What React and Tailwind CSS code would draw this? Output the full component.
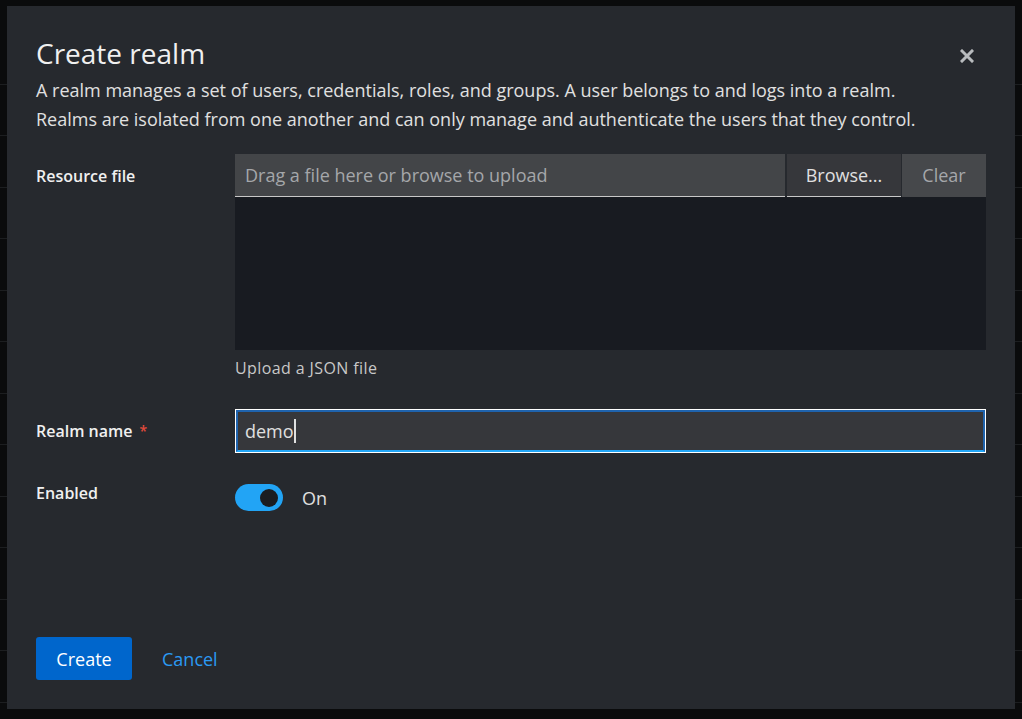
import React from "react";

const font = { fontFamily: "'Open Sans', 'Noto Sans', sans-serif" };

function Row() {
  return <div className="h-[51.5px] border-b border-[#1c1e20]" />;
}

export default function App() {
  const rows = Array.from({ length: 13 });
  return (
    <div className="relative w-[1022px] h-[719px] overflow-hidden bg-[#0a0b0c]" style={font}>
      <div className="flex flex-col pt-[33px]">
        {rows.map((_, i) => (
          <Row key={i} />
        ))}
      </div>
      <div className="absolute left-[7px] top-[6px] w-[1008px] h-[703px] bg-[#26292e] px-[29px] pt-[30px] pb-[29px] flex flex-col text-[#e0e0e0]">
        <div className="flex items-start justify-between">
          <h1 className="text-[28px] leading-[34px] text-[#f0f0f0]">Create realm</h1>
          <button className="mt-[13px] mr-[12px] text-[#b8bbbe]" aria-label="Close">
            <svg width="14" height="14" viewBox="0 0 14 14">
              <path d="M2 2 L12 12 M12 2 L2 12" stroke="currentColor" strokeWidth="3" strokeLinecap="square" />
            </svg>
          </button>
        </div>
        <p className="mt-[6px] text-[18px] leading-[29px] text-[#e0e0e0]">
          A realm manages a set of users, credentials, roles, and groups. A user belongs to and logs into a realm.
          <br />
          Realms are isolated from one another and can only manage and authenticate the users that they control.
        </p>

        <div className="mt-[20px] grid grid-cols-[199px_1fr]">
          <div className="pt-[11px] text-[16px] leading-[22px] font-semibold text-[#f0f0f0]">Resource file</div>
          <div className="flex flex-col">
            <div className="flex h-[43px]">
              <div className="flex-1 flex items-center px-[10px] bg-[#434548] border-b border-[#c8c8c8] text-[18px] leading-[24px] text-[#a5a7aa]">
                Drag a file here or browse to upload
              </div>
              <div className="w-[114px] ml-[2px] flex items-center justify-center bg-[#36373b] border-b border-[#c8c8c8] text-[18px] leading-[24px] text-[#e0e0e0]">
                Browse...
              </div>
              <div className="w-[84px] ml-[1px] flex items-center justify-center pb-[1px] bg-[#46484b] text-[18px] leading-[24px] text-[#a5a7aa]">
                Clear
              </div>
            </div>
            <div className="h-[153px] bg-[#181b21]" />
            <div className="mt-[8px] text-[16px] leading-[20px] tracking-[0.4px] text-[#c8c8c8]">Upload a JSON file</div>
          </div>
        </div>

        <div className="mt-[31px] grid grid-cols-[199px_1fr] items-center">
          <div className="text-[16px] leading-[22px] font-semibold text-[#f0f0f0] flex items-center">
            Realm name
            <span className="ml-[7px] text-[#e24a3b] text-[14px]">*</span>
          </div>
          <div className="h-[44px] outline outline-1 outline-white -outline-offset-1 p-[1px]">
            <div className="h-full border-2 border-[#1f63ad] border-b-[#22a6f7] bg-[#36373b] flex items-center px-[7px] text-[18px] leading-[24px] text-[#e0e0e0]">
              demo<span className="inline-block w-[2px] h-[24px] bg-[#e0e0e0]" />
            </div>
          </div>
        </div>

        <div className="mt-[31px] grid grid-cols-[199px_1fr]">
          <div className="text-[16px] leading-[22px] font-semibold text-[#f0f0f0] -mt-[2px]">Enabled</div>
          <div className="flex items-center">
            <div className="w-[48px] h-[27px] rounded-full bg-[#22a4f5] flex items-center justify-end pr-[5px]">
              <div className="w-[18px] h-[18px] rounded-full bg-[#1b1d21]" />
            </div>
            <span className="ml-[19px] text-[18px] leading-[24px] text-[#e0e0e0]">On</span>
          </div>
        </div>

        <div className="mt-auto flex items-center">
          <button className="w-[96px] h-[43px] rounded-[3px] bg-[#0066cc] text-white text-[18px] leading-[24px]">Create</button>
          <button className="ml-[30px] text-[18px] leading-[24px] text-[#2b9af3]">Cancel</button>
        </div>
      </div>
    </div>
  );
}
